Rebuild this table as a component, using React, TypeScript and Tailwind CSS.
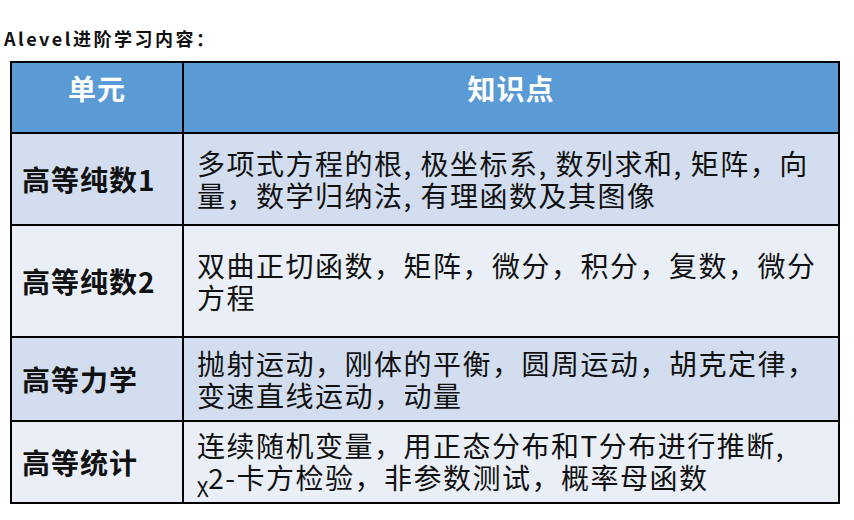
import React from "react";

const font = { fontFamily: '"Noto Sans CJK SC", "Noto Sans", sans-serif' };

const rows: { label: string; lines: React.ReactNode[]; bg: string; h: string; last?: boolean }[] = [
  {
    label: "高等纯数1",
    lines: ["多项式方程的根, 极坐标系, 数列求和, 矩阵，向", "量，数学归纳法, 有理函数及其图像"],
    bg: "bg-[#d2deef]",
    h: "h-[92px]",
  },
  {
    label: "高等纯数2",
    lines: ["双曲正切函数，矩阵，微分，积分，复数，微分", "方程"],
    bg: "bg-[#eaeff7]",
    h: "h-[112px]",
  },
  {
    label: "高等力学",
    lines: ["抛射运动，刚体的平衡，圆周运动，胡克定律，", "变速直线运动，动量"],
    bg: "bg-[#d2deef]",
    h: "h-[84px]",
  },
  {
    label: "高等统计",
    lines: [
      "连续随机变量，用正态分布和T分布进行推断,",
      <>
        <span className="text-[21px] relative top-[4px] tracking-[0px]">χ</span>2-卡方检验，非参数测试，概率母函数
      </>,
    ],
    bg: "bg-[#eaeff7]",
    h: "h-[80px]",
    last: true,
  },
];

export default function App() {
  return (
    <div className="w-[854px] h-[520px] bg-white text-[#111]" style={font}>
      <div className="pl-[4px] pt-[27px] text-[18px] leading-[22px] font-bold tracking-[2.5px]">
        Alevel进阶学习内容：
      </div>
      <div className="ml-[10px] mt-[12px] w-[830px] border-2 border-black">
        <div className="flex h-[71px] border-b-2 border-black bg-[#5b9bd5] text-white font-bold text-[28px] leading-[36px] tracking-[1px]">
          <div className="w-[172px] shrink-0 border-r-2 border-black flex items-start justify-center pt-[7px]">
            单元
          </div>
          <div className="flex-1 flex items-start justify-center pt-[7px]">知识点</div>
        </div>
        {rows.map((r, i) => (
          <div
            key={i}
            className={`flex ${r.h} ${r.bg} ${r.last ? "" : "border-b-2 border-black"}`}
          >
            <div className="w-[172px] shrink-0 border-r-2 border-black flex items-center pl-[10px] font-bold text-[28px] tracking-[1px]">
              {r.label}
            </div>
            <div className="flex-1 flex flex-col justify-center pl-[13px] text-[28px] leading-[32px] tracking-[1.5px]">
              {r.lines.map((l, j) => (
                <div key={j} className="whitespace-nowrap">
                  {l}
                </div>
              ))}
            </div>
          </div>
        ))}
      </div>
    </div>
  );
}
